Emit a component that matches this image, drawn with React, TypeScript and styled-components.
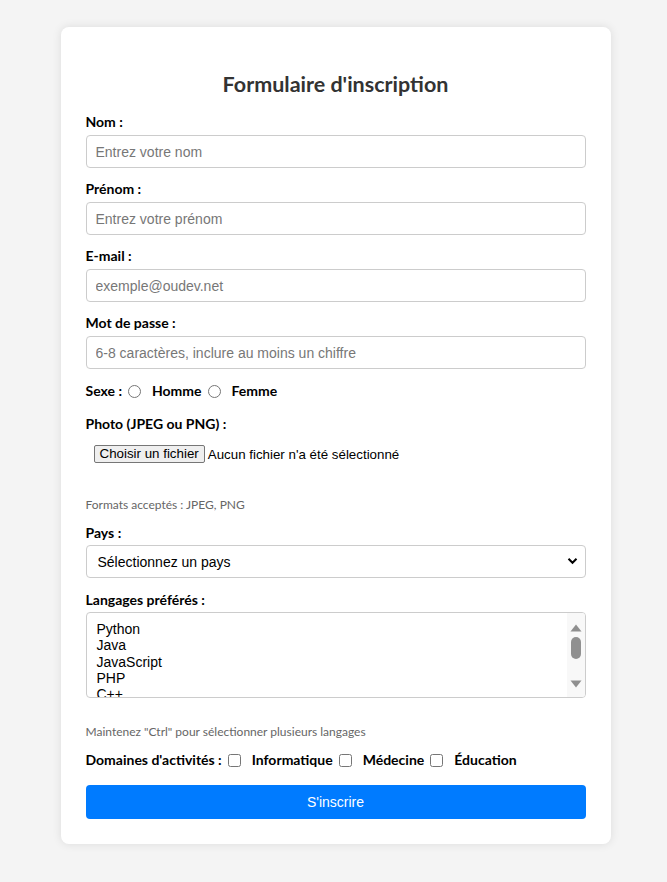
import React from "react";
import styled, { createGlobalStyle } from "styled-components";

const GlobalStyle = createGlobalStyle`
  html, body { margin: 0; padding: 0; background: #f4f4f4; }
  body { font-family: "Lato", "Liberation Sans", sans-serif; }
`;

const Page = styled.div`
  display: flex;
  justify-content: center;
  padding: 27px 0 39px 4px;
`;

const Card = styled.form`
  width: 500px;
  background: #fff;
  border-radius: 8px;
  box-shadow: 0 0 10px rgba(0, 0, 0, 0.1);
  padding: 25px;
  display: flex;
  flex-direction: column;
`;

const Title = styled.h2`
  margin: 19px 0 15px;
  text-align: center;
  font-family: "Lato", sans-serif;
  font-size: 21.5px;
  line-height: 27px;
  font-weight: 700;
  color: #333;
`;

const Label = styled.label<{ $mb?: number }>`
  display: block;
  font-family: "Lato", sans-serif;
  font-size: 14px;
  line-height: 18px;
  font-weight: 700;
  color: #000;
  margin-bottom: ${(p) => (p.$mb ?? 4)}px;
`;

const TextInput = styled.input`
  box-sizing: border-box;
  width: 100%;
  height: 33px;
  padding: 0 9px;
  border: 1px solid #ccc;
  border-radius: 4px;
  font-family: "Liberation Sans", Arial, sans-serif;
  font-size: 14px;
  color: #000;
  margin: 0 0 12px;
  outline: none;
  &::placeholder { color: #777; }
`;

const InlineRow = styled.div<{ $mt: number; $mb: number }>`
  display: flex;
  align-items: center;
  font-family: "Lato", sans-serif;
  font-size: 14px;
  line-height: 18px;
  font-weight: 700;
  color: #000;
  margin: ${(p) => p.$mt}px 0 ${(p) => p.$mb}px;
`;

const Choice = styled.input`
  width: 13px;
  height: 13px;
  margin: 0 11px 0 6px;
  accent-color: #767676;
`;

const FileRow = styled.div`
  display: flex;
  align-items: center;
  gap: 3px;
  padding: 8px 0 8px 8px;
  margin-bottom: 26px;
  font-family: "Liberation Sans", Arial, sans-serif;
  font-size: 13.33px;
  color: #000;
`;

const FileButton = styled.button`
  box-sizing: border-box;
  height: 18px;
  padding: 0 5px;
  background: #efefef;
  border: 1px solid #767676;
  border-radius: 2px;
  font-family: "Liberation Sans", Arial, sans-serif;
  font-size: 13.33px;
  color: #000;
  line-height: 16px;
`;

const Hint = styled.small<{ $mb: number }>`
  display: block;
  font-family: "Lato", sans-serif;
  font-size: 12px;
  line-height: 16px;
  color: #666;
  margin-bottom: ${(p) => p.$mb}px;
`;

const SelectWrap = styled.div`
  position: relative;
  margin-bottom: 13px;
`;

const Select = styled.select`
  box-sizing: border-box;
  width: 100%;
  height: 33px;
  padding: 0 11px;
  border: 1px solid #ccc;
  border-radius: 4px;
  background: #fff;
  appearance: none;
  font-family: "Liberation Sans", Arial, sans-serif;
  font-size: 14px;
  color: #000;
  outline: none;
`;

const Chevron = styled.svg`
  position: absolute;
  right: 8px;
  top: 12px;
  pointer-events: none;
`;

const ListBox = styled.div`
  box-sizing: border-box;
  position: relative;
  height: 86px;
  border: 1px solid #ccc;
  border-radius: 4px;
  overflow: hidden;
  padding: 8px 18px 0 8px;
  margin-bottom: 26px;
`;

const Option = styled.div`
  font-family: "Liberation Sans", Arial, sans-serif;
  font-size: 14px;
  line-height: 16.3px;
  color: #000;
  padding-left: 2px;
`;

const ScrollTrack = styled.div`
  position: absolute;
  top: 0;
  right: 0;
  bottom: 0;
  width: 18px;
  background: #f8f8f8;
  display: flex;
  flex-direction: column;
  align-items: center;
`;

const Thumb = styled.div`
  width: 10px;
  height: 22px;
  border-radius: 5px;
  background: #909090;
  margin: 5px 0 auto;
`;

const ArrowIcon = styled.svg<{ $m: string }>`
  display: block;
  margin: ${(p) => p.$m};
`;

const Submit = styled.button`
  box-sizing: border-box;
  width: 100%;
  height: 34px;
  border: none;
  border-radius: 4px;
  background: #007bff;
  color: #fff;
  font-family: "Liberation Sans", Arial, sans-serif;
  font-size: 14px;
  margin-top: 16px;
`;

const fields = [
  { label: "Nom :", type: "text", ph: "Entrez votre nom" },
  { label: "Prénom :", type: "text", ph: "Entrez votre prénom" },
  { label: "E-mail :", type: "email", ph: "exemple@oudev.net" },
  { label: "Mot de passe :", type: "password", ph: "6-8 caractères, inclure au moins un chiffre" },
];

const langs = ["Python", "Java", "JavaScript", "PHP", "C++", "Ruby"];

export default function App() {
  return (
    <>
      <GlobalStyle />
      <Page>
        <Card onSubmit={(e) => e.preventDefault()}>
          <Title>Formulaire d'inscription</Title>
          {fields.map((f) => (
            <React.Fragment key={f.label}>
              <Label>{f.label}</Label>
              <TextInput type={f.type} placeholder={f.ph} />
            </React.Fragment>
          ))}
          <InlineRow $mt={1} $mb={15}>
            Sexe :<Choice type="radio" name="sexe" />Homme
            <Choice type="radio" name="sexe" />Femme
          </InlineRow>
          <Label $mb={4}>Photo (JPEG ou PNG) :</Label>
          <FileRow>
            <FileButton type="button">Choisir un fichier</FileButton>
            <span>Aucun fichier n'a été sélectionné</span>
          </FileRow>
          <Hint $mb={11}>Formats acceptés : JPEG, PNG</Hint>
          <Label $mb={3}>Pays :</Label>
          <SelectWrap>
            <Select defaultValue="">
              <option value="">Sélectionnez un pays</option>
            </Select>
            <Chevron width="11" height="8" viewBox="0 0 11 8">
              <path d="M1.5 1.8 L5.5 5.8 L9.5 1.8" fill="none" stroke="#000" strokeWidth="2" />
            </Chevron>
          </SelectWrap>
          <Label $mb={3}>Langages préférés :</Label>
          <ListBox role="listbox">
            {langs.map((l) => (
              <Option key={l} role="option">{l}</Option>
            ))}
            <ScrollTrack>
              <ArrowIcon $m="11px 0 0" width="12" height="8" viewBox="0 0 12 8">
                <path d="M6 0.5 L11.5 7.5 L0.5 7.5 Z" fill="#8f8f8f" />
              </ArrowIcon>
              <Thumb />
              <ArrowIcon $m="0 0 9px" width="12" height="8" viewBox="0 0 12 8">
                <path d="M0.5 0.5 L11.5 0.5 L6 7.5 Z" fill="#8f8f8f" />
              </ArrowIcon>
            </ScrollTrack>
          </ListBox>
          <Hint $mb={10}>Maintenez "Ctrl" pour sélectionner plusieurs langages</Hint>
          <InlineRow $mt={1} $mb={0}>
            Domaines d'activités :<Choice type="checkbox" />Informatique
            <Choice type="checkbox" />Médecine
            <Choice type="checkbox" />Éducation
          </InlineRow>
          <Submit type="submit">S'inscrire</Submit>
        </Card>
      </Page>
    </>
  );
}
